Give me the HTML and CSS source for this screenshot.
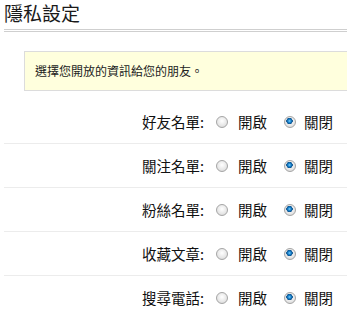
FILE: index.html
```html
<!DOCTYPE html>
<html lang="zh-Hant">
<head>
<meta charset="utf-8">
<link rel="stylesheet" href="styles.css">
</head>
<body>
<div class="page">
  <h1 class="title">隱私設定</h1>
  <div class="notice">選擇您開放的資訊給您的朋友。</div>
  <div class="rows">
    <div class="row"><span class="label">好友名單:</span><span class="opt"><span class="radio"></span>開啟</span><span class="opt"><span class="radio on"></span>關閉</span></div>
    <div class="row"><span class="label">關注名單:</span><span class="opt"><span class="radio"></span>開啟</span><span class="opt"><span class="radio on"></span>關閉</span></div>
    <div class="row"><span class="label">粉絲名單:</span><span class="opt"><span class="radio"></span>開啟</span><span class="opt"><span class="radio on"></span>關閉</span></div>
    <div class="row"><span class="label">收藏文章:</span><span class="opt"><span class="radio"></span>開啟</span><span class="opt"><span class="radio on"></span>關閉</span></div>
    <div class="row"><span class="label">搜尋電話:</span><span class="opt"><span class="radio"></span>開啟</span><span class="opt"><span class="radio on"></span>關閉</span></div>
  </div>
</div>
</body>
</html>
```
FILE: styles.css
```css
html, body {
  margin: 0;
  padding: 0;
  overflow: hidden;
  background: #fff;
}
body {
  font-family: "Noto Sans CJK TC", "Noto Sans", sans-serif;
  color: #111;
}
.page {
  padding: 0 0 0 4px;
}
.title {
  margin: 0;
  font-size: 19px;
  font-weight: normal;
  line-height: 26px;
  box-sizing: border-box;
  color: #1a1a1a;
  border-bottom: 3px double #cfcfcf;
  height: 32px;
}
.notice {
  margin: 19px 0 0 20px;
  height: 40px;
  box-sizing: border-box;
  border: 1px solid #dcdcdc;
  border-right: none;
  background: #ffffdd;
  font-size: 12px;
  line-height: 38px;
  padding-left: 10px;
  color: #222;
  white-space: nowrap;
}
.rows {
  margin-top: 9px;
}
.row {
  display: flex;
  align-items: center;
  height: 44px;
  box-sizing: border-box;
  border-bottom: 1px solid #ececec;
  font-size: 14.5px;
  white-space: nowrap;
}
.label {
  flex: 0 0 200px;
  text-align: right;
  margin-right: 12px;
}
.opt {
  flex: 0 0 auto;
  display: flex;
  align-items: center;
  gap: 10px;
  margin-right: 17px;
}
.opt + .opt {
  gap: 8px;
  margin-right: 0;
}
.radio {
  flex: 0 0 auto;
  width: 10px;
  height: 10px;
  border-radius: 50%;
  border: 1px solid #a5a5a5;
  background: radial-gradient(circle at 50% 40%, #ffffff 0%, #e6e6e6 60%, #cfcfcf 100%);
  box-sizing: content-box;
}
.radio.on {
  background:
    radial-gradient(circle at 45% 40%, #7fd0ff 0, #1a86d0 1.5px, #0b4f8a 3px, transparent 3.4px),
    radial-gradient(circle at 50% 40%, #ffffff 0%, #e6e6e6 60%, #cfcfcf 100%);
}
```
